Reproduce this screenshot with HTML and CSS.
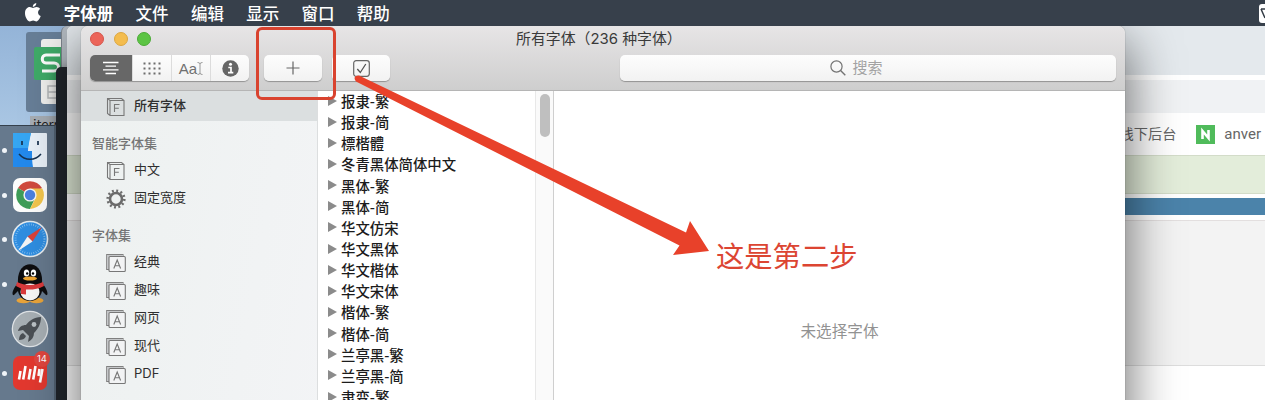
FILE: index.html
```html
<!DOCTYPE html>
<html lang="zh-CN">
<head>
    <meta charset="UTF-8">
    <meta name="viewport" content="width=device-width, initial-scale=1.0">
    <title>字体册</title>
    <link rel="stylesheet" href="styles.css">
</head>
<body>
    <!-- shared icons -->
    <svg class="defs" width="0" height="0">
        <symbol id="book" viewBox="0 0 20 20">
            <path d="M1.5 1.5h14l2.500 2v15H4l-2.500-2zM1.500 1.500L4 3.500h14M4 3.500v15" fill="none" stroke="#777" stroke-width="1.100"/>
            <path d="M8.500 15V7.500h5M8.500 11.200h4.300" fill="none" stroke="#777" stroke-width="1.100"/>
        </symbol>
        <symbol id="stack" viewBox="0 0 20 20">
            <path d="M3 16.500H.7V1.500H17V3.500" fill="none" stroke="#808080" stroke-width="1.100"/>
            <path d="M1 2h16v1.500H3V16H1z" fill="#c5c7c9"/>
            <rect x="3" y="3.500" width="16.300" height="15" rx="1" fill="#f2f3f4" stroke="#777" stroke-width="1.100"/>
            <path d="M7.800 15.500L11.200 7l3.400 8.500M9 12.700h4.400" fill="none" stroke="#777" stroke-width="1.100"/>
        </symbol>
    </svg>

    <div class="menubar">
        <svg class="apple" width="18" height="20" viewBox="0 0 18 20">
            <path d="M12.300 0c.2 2-1.700 4-3.500 3.900C8.600 2.100 10.400.2 12.300 0zM9 5.100c.8 0 1.900-1 3.600-1 1.400 0 2.700.7 3.500 1.900-3 1.900-2.600 5.900.6 7.100-.8 2.300-2.500 5.300-4.300 5.300-1.300 0-1.700-.8-3.300-.8s-2.100.8-3.300.8C3.700 18.400 1 14.200 1 10.200c0-3.800 2.300-6.100 4.700-6.100 1.500 0 2.500 1 3.300 1z" fill="#fff"/>
        </svg>
        <b>字体册</b>
        <span>文件</span>
        <span>编辑</span>
        <span>显示</span>
        <span>窗口</span>
        <span>帮助</span>
        <div class="status">
            <svg width="6" height="19" viewBox="0 0 6 19"><path d="M2 5h6M2 5l4 9" stroke="#333b45" stroke-width="1.500" fill="none"/></svg>
        </div>
    </div>

    <div class="desktop">
        <div class="file">
            <svg width="35" height="80" viewBox="0 0 35 80">
                <rect x="15" y="7" width="30" height="65" rx="3" fill="#f1f1ef"/>
                <rect x="8" y="15" width="40" height="33" rx="2" fill="#3fab68"/>
                <path d="M34 23H20c-5 0-5 8 0 8h8c6 0 6 8 0 8H16" fill="none" stroke="#fff" stroke-width="3"/>
                <path d="M34 54H22v12h12M22 60h12" fill="none" stroke="#b5b8ba" stroke-width="1.500"/>
            </svg>
        </div>
        <div class="file-name">iterm</div>

        <div class="window back"></div>
        <div class="window terminal"></div>

        <div class="window browser">
            <div class="tabs"></div>
            <div class="address"></div>
            <div class="bookmarks">
                <span>线下后台</span>
                <svg width="19" height="19" viewBox="0 0 19 19"><rect width="19" height="19" fill="#50bb5b"/><path d="M6.500 14V6l6 7V5" fill="none" stroke="#fff" stroke-width="2.600"/></svg>
                <span>anver</span>
            </div>
            <div class="notice"></div>
            <div class="bluebar"></div>
            <div class="panel"></div>
        </div>

        <div class="dock">
            <div class="app on">
                <svg width="36" height="36" viewBox="0 0 36 36">
                    <rect x="1" y="1" width="34" height="34" rx="1" fill="#e8f0f8"/>
                    <path d="M1 1h18c-2 6-3 12-3 18h4c0 6 0 11 1 16H1z" fill="#2389ec"/>
                    <path d="M1 1h18l-3 15H1z" fill="#36a6f2"/>
                    <path d="M10 9v4M26 9v4" stroke="#17324f" stroke-width="1.700"/>
                    <path d="M7 22c6 7 16 7 22 0" fill="none" stroke="#17324f" stroke-width="1.500"/>
                </svg>
            </div>
            <div class="app on">
                <svg width="36" height="36" viewBox="0 0 36 36">
                    <rect x="1" y="1" width="34" height="34" rx="7" fill="#fdfdfc"/>
                    <path d="M18 18L6 11.100A13.900 13.900 0 0 1 30 11.100z" fill="#d04a3e"/>
                    <path d="M18 18L6 11.100A13.900 13.900 0 0 0 18 31.900L23.200 21z" fill="#3f9d58"/>
                    <path d="M18 11.500H30.300A13.900 13.900 0 0 1 18 31.900L23.600 21z" fill="#f3c64d"/>
                    <circle cx="18" cy="18" r="6.600" fill="#f5f5f5"/>
                    <circle cx="18" cy="18" r="5.200" fill="#4a80e0"/>
                </svg>
            </div>
            <div class="app on">
                <svg width="38" height="38" viewBox="0 0 38 38">
                    <circle cx="19" cy="19" r="18.300" fill="#e5eaed"/>
                    <circle cx="19" cy="19" r="16.700" fill="#2f8de0"/>
                    <circle cx="19" cy="19" r="14.500" fill="none" stroke="#9cccf2" stroke-width="2" stroke-dasharray=".6 1.700"/>
                    <path d="M31 7L16.500 16.500l5 5z" fill="#d9423a"/>
                    <path d="M7 31l14.500-9.500-5-5z" fill="#f4f4f4"/>
                </svg>
            </div>
            <div class="app on">
                <svg width="36" height="40" viewBox="0 0 36 40">
                    <ellipse cx="11.500" cy="36.500" rx="7" ry="2.800" fill="#e9a43a"/>
                    <ellipse cx="24.500" cy="36.500" rx="7" ry="2.800" fill="#e9a43a"/>
                    <path d="M6 19C-1 27 0 32 2 31l4-4c1 6 6 10 12 10s11-4 12-10l4 4c2 1 3-4-4-12z" fill="#0d0d0f"/>
                    <ellipse cx="18" cy="28" rx="9.500" ry="8.500" fill="#f6f6f6"/>
                    <path d="M6 19C4-6 32-6 30 19z" fill="#0d0d0f"/>
                    <ellipse cx="14.500" cy="9" rx="2.700" ry="3.500" fill="#fff"/>
                    <ellipse cx="21.500" cy="9" rx="2.700" ry="3.500" fill="#fff"/>
                    <circle cx="15.200" cy="9.500" r="1.200"/>
                    <circle cx="21" cy="9.500" r="1.200"/>
                    <ellipse cx="18" cy="14.500" rx="7" ry="2" fill="#eda431"/>
                    <path d="M5 18c8 4 18 4 26 0l1 4c-6 3-12 4-18 3.500v5l-5-.5v-5.500l-5-2.500z" fill="#d93a3c"/>
                </svg>
            </div>
            <div class="app">
                <svg width="38" height="38" viewBox="0 0 38 38">
                    <circle cx="19" cy="19" r="18.300" fill="#dfe3e6"/>
                    <circle cx="19" cy="19" r="17" fill="#a7afb4"/>
                    <path d="M30 7c-7 0-12 4-15 8-4 0-7 2-8 6l5-1 6 6-1 6c4-2 6-5 6-9 4-4 7-9 7-16zM12 23c-3 1-4 4-4 7 3 0 6-1 7-4z" fill="#4a4f54"/>
                    <circle cx="23" cy="14.500" r="2.400" fill="#b9c0c4"/>
                </svg>
            </div>
            <div class="app on">
                <svg width="36" height="36" viewBox="0 0 36 36">
                    <rect x="1" y="1" width="34" height="34" rx="7" fill="#e2382f"/>
                    <path d="M8.500 16L7 24.500M13.500 11l-2.300 13.500M18.500 14l-1.800 10.500M23.500 11l-2.300 13.500M27.500 14l-1 7M30.500 14L28 27.500" fill="none" stroke="#fff" stroke-width="2.600"/>
                </svg>
                <i class="badge">14</i>
            </div>
            <div class="app next">
                <svg width="36" height="36" viewBox="0 0 36 36"><path d="M20 5l2-3M25 5l2-3" stroke="#d8c56a" stroke-width="1.500"/></svg>
            </div>
        </div>

        <div class="window fontbook">
            <div class="head">
                <div class="titlebar">
                    <div class="lights"><i class="red"></i><i class="yellow"></i><i class="green"></i></div>
                    <div class="title">所有字体（236 种字体）</div>
                </div>
                <div class="toolbar">
                    <div class="segments">
                        <div class="seg active">
                            <svg width="18" height="14" viewBox="0 0 18 14"><path d="M1 1.500h15.500M3.500 5.200h10.500M1 8.800h15.500M3.500 12.500h10.500" stroke="#fff" stroke-width="1.300"/></svg>
                        </div>
                        <div class="seg">
                            <svg width="18" height="13" viewBox="0 0 18 13"><path d="M.5 1.500h17M.5 6.500h17M.5 11.500h17" stroke="#6d6d6d" stroke-width="2" stroke-dasharray="2 3"/></svg>
                        </div>
                        <div class="seg sample">Aa<svg width="6" height="13" viewBox="0 0 6 13"><path d="M.5.500Q3 .5 3 2V11Q3 12.500.5 12.500M5.500.500Q3 .5 3 2M5.500 12.500Q3 12.500 3 11" fill="none" stroke="#999"/></svg></div>
                        <div class="seg">
                            <svg width="17" height="17" viewBox="0 0 17 17"><circle cx="8.500" cy="8.500" r="8.200" fill="#666"/><circle cx="8.500" cy="4.300" r="1.500" fill="#fff"/><path d="M6.300 7.500h2.700v5M6 12.600h5.300" stroke="#fff" stroke-width="1.700" fill="none"/></svg>
                        </div>
                    </div>
                    <div class="button add">
                        <svg width="14" height="14" viewBox="0 0 14 14"><path d="M7 .5v13M.5 7h13" stroke="#666" stroke-width="1.200"/></svg>
                    </div>
                    <div class="button check">
                        <svg width="17" height="17" viewBox="0 0 17 17"><rect x=".7" y=".7" width="15.600" height="15.600" rx="2.500" fill="none" stroke="#666" stroke-width="1.200"/><path d="M4.300 9l3 3.500 5.500-8.500" fill="none" stroke="#555" stroke-width="1.300"/></svg>
                    </div>
                    <div class="search">
                        <svg width="16" height="16" viewBox="0 0 16 16"><circle cx="6.500" cy="6.500" r="5.600" fill="none" stroke="#737373" stroke-width="1.200"/><path d="M10.600 10.600l4.700 4.700" stroke="#737373" stroke-width="1.400"/></svg>
                        <span>搜索</span>
                    </div>
                </div>
            </div>

            <div class="content">
                <div class="sidebar">
                    <div class="item selected"><svg><use href="#book"/></svg>所有字体</div>
                    <h4>智能字体集</h4>
                    <div class="item"><svg><use href="#book"/></svg>中文</div>
                    <div class="item">
                        <svg viewBox="0 0 20 20"><circle cx="10" cy="10" r="6" fill="none" stroke="#6b6b6b" stroke-width="2.600"/><circle cx="10" cy="10" r="8.300" fill="none" stroke="#6b6b6b" stroke-width="2.600" stroke-dasharray="1.900 2.445"/></svg>固定宽度
                    </div>
                    <h4 class="sets">字体集</h4>
                    <div class="item"><svg><use href="#stack"/></svg>经典</div>
                    <div class="item"><svg><use href="#stack"/></svg>趣味</div>
                    <div class="item"><svg><use href="#stack"/></svg>网页</div>
                    <div class="item"><svg><use href="#stack"/></svg>现代</div>
                    <div class="item"><svg><use href="#stack"/></svg>PDF</div>
                </div>
                <ul class="fonts">
                    <li>报隶-繁</li>
                    <li>报隶-简</li>
                    <li>標楷體</li>
                    <li>冬青黑体简体中文</li>
                    <li>黑体-繁</li>
                    <li>黑体-简</li>
                    <li>华文仿宋</li>
                    <li>华文黑体</li>
                    <li>华文楷体</li>
                    <li>华文宋体</li>
                    <li>楷体-繁</li>
                    <li>楷体-简</li>
                    <li>兰亭黑-繁</li>
                    <li>兰亭黑-简</li>
                    <li>隶变-繁</li>
                </ul>
                <div class="scroll"><div class="thumb"></div></div>
                <div class="preview">未选择字体</div>
            </div>
        </div>
    </div>

    <!-- step marks drawn over the window -->
    <div class="mark-box"></div>
    <svg class="mark-arrow" width="1265" height="400" viewBox="0 0 1265 400">
        <path d="M359 75.500L686 232.500L690 221L709 251L673 255L679.500 245.500L356 81.500Q352 76 359 75.500z" fill="#e8412a"/>
    </svg>
    <div class="mark-text">这是第二步</div>
</body>
</html>
```
FILE: styles.css
```css
*{
    margin: 0;
    padding: 0;
    box-sizing: border-box;
}

body{
    width: 1265px;
    height: 400px;
    overflow: hidden;
    position: relative;
    font-family: "Noto Sans CJK SC", sans-serif;
    background-color: #9dbbdc;
}

svg{
    display: block;
    flex-shrink: 0;
}

.defs{
    position: absolute;
}

/* menu bar */
.menubar{
    height: 26px;
    display: flex;
    align-items: center;
    gap: 22.3px;
    padding-left: 24px;
    background-color: #37404b;
    color: #fff;
    font-size: 16.5px;
    line-height: 24px;
    font-weight: 500;
}

.menubar b{
    font-weight: 700;
}

.menubar b,
.menubar span{
    margin-top: -1px;
}

.apple{
    margin-right: -0.5px;
}

.status{
    margin-left: auto;
    width: 6px;
    height: 19px;
    background-color: #fff;
    border-radius: 3px 0 0 3px;
}

/* desktop */
.desktop{
    position: relative;
    height: 374px;
    overflow: hidden;
    background: linear-gradient(#94b4d8, #a9c6e3 100px);
}

.file{
    position: absolute;
    left: 26px;
    top: 6px;
    width: 35px;
    height: 80px;
    background-color: #677e97;
    border-radius: 3px 0 0 3px;
    overflow: hidden;
}

.file-name{
    position: absolute;
    left: 30px;
    top: 90px;
    width: 40px;
    padding-left: 3px;
    background-color: #a6adb4;
    font-size: 13px;
    line-height: 16px;
    color: #222;
}

.window{
    position: absolute;
}

.back{
    left: 61px;
    top: 0;
    width: 400px;
    height: 374px;
    background-color: #b3bac1;
    border-left: 1px solid #7d858d;
    border-radius: 6px 0 0 0;
}

.terminal{
    left: 56px;
    top: 41px;
    width: 400px;
    height: 333px;
    background-color: #20252b;
    border-radius: 5px 0 0 0;
    box-shadow: 0 0 10px rgba(0, 0, 0, 0.3);
}

.browser{
    left: 67px;
    top: 0;
    width: 1198px;
    height: 374px;
    background-color: #fff;
    border-radius: 6px 0 0 0;
    overflow: hidden;
}

.tabs{
    height: 49px;
    background-color: #e4e9ed;
}

.address{
    height: 38px;
    background-color: #f0f2f4;
    border-top: 5px solid #fff;
}

.bookmarks{
    height: 42px;
    display: flex;
    align-items: center;
    justify-content: flex-end;
    gap: 9px;
    padding-right: 4px;
    font-size: 14.2px;
    line-height: 20px;
    color: #666;
}

.bookmarks svg{
    margin-left: 11px;
}

.bookmarks span:first-child{
    margin-top: -2px;
}

.bookmarks span:last-child{
    font-family: Roboto, sans-serif;
    font-size: 15px;
}

.notice{
    height: 39px;
    background-color: #e3edda;
    border-top: 1px solid #d3dcc9;
    border-bottom: 1px solid #d3dcc9;
}

.bluebar{
    height: 17px;
    margin: 4px 0 5px 100px;
    background-color: #4b83aa;
}

.panel{
    height: 146px;
    background-color: #f3f3f3;
    border-top: 1px solid #e3dfdf;
    border-bottom: 1px solid #ddd;
}

/* dock */
.dock{
    position: absolute;
    left: 0;
    top: 99px;
    width: 56px;
    height: 275px;
    padding-top: 2px;
    background-color: #66798d;
    border-top: 1px solid #35414d;
    border-right: 2px solid #526171;
    overflow: hidden;
}

.app{
    position: relative;
    height: 44.6px;
    padding-left: 5px;
    display: flex;
    align-items: center;
    justify-content: center;
}

.app.on::before{
    content: "";
    position: absolute;
    left: 2px;
    top: 20px;
    width: 5px;
    height: 5px;
    border-radius: 50%;
    background-color: #f0f4f8;
}

.badge{
    position: absolute;
    right: 4px;
    top: 0;
    width: 16px;
    height: 16px;
    border-radius: 50%;
    background-color: #e0463f;
    color: #fff;
    font: 9.5px/16px Inter, sans-serif;
    text-align: center;
}

/* font book window */
.fontbook{
    left: 81px;
    top: 0;
    width: 1044px;
    height: 500px;
    display: flex;
    flex-direction: column;
    background-color: #fff;
    border-radius: 7px 7px 0 0;
    box-shadow: 0 0 1px rgba(0, 0, 0, 0.6), 0 20px 50px 4px rgba(0, 0, 0, 0.55);
}

.head{
    height: 65px;
    background: linear-gradient(#e7e5e6, #cecece);
    border-bottom: 1px solid #b5b5b5;
    border-radius: 7px 7px 0 0;
}

.titlebar{
    height: 29px;
    display: flex;
    align-items: center;
    padding-left: 9px;
}

.lights{
    display: flex;
    gap: 9.5px;
    margin-top: -3px;
}

.lights i{
    width: 14px;
    height: 14px;
    border-radius: 50%;
}

.red{
    background-color: #ec6459;
    border: 1px solid #d5554b;
}

.yellow{
    background-color: #f4bc4e;
    border: 1px solid #dca63f;
}

.green{
    background-color: #5cc444;
    border: 1px solid #4bab36;
}

.title{
    margin-left: 365px;
    margin-top: -4px;
    font-family: Inter, "Noto Sans CJK SC", sans-serif;
    font-size: 14.9px;
    line-height: 22px;
    color: #3a3a3a;
    white-space: nowrap;
}

.toolbar{
    display: flex;
    padding: 0 9px;
}

.segments,
.button,
.search{
    height: 26px;
    display: flex;
    align-items: center;
    justify-content: center;
    background: linear-gradient(#fdfdfd, #f2f2f2);
    border-radius: 5px;
    box-shadow: 0 1px 1px rgba(0, 0, 0, 0.3);
}

.segments{
    width: 159px;
    overflow: hidden;
}

.seg{
    flex: 1;
    height: 26px;
    display: flex;
    align-items: center;
    justify-content: center;
    border-left: 1px solid #dcdcdc;
}

.seg.active{
    flex: 0 0 42px;
    background-color: #676767;
    border-left: none;
}

.sample{
    font-family: "Liberation Sans", sans-serif;
    font-size: 15px;
    color: #707070;
}

.add{
    width: 58px;
    margin-left: 15px;
}

.check{
    width: 58px;
    margin-left: 10px;
}

.search{
    flex: 1;
    margin-left: 230px;
    padding-right: 23px;
    gap: 6px;
    font-size: 15px;
    line-height: 24px;
    color: #a3a3a3;
}

.search span{
    margin-top: -2px;
}

.content{
    flex: 1;
    display: flex;
}

.sidebar{
    width: 237px;
    background: linear-gradient(100deg, #edf1f0, #f3f4f6);
    border-right: 1px solid #dcdedf;
}

.item{
    height: 28px;
    display: flex;
    align-items: center;
    gap: 8px;
    padding: 0 0 3px 25px;
    font-family: Inter, "Noto Sans CJK SC", sans-serif;
    font-size: 13px;
    line-height: 20px;
    color: #2f2f2f;
}

.item svg{
    width: 20px;
    height: 20px;
    position: relative;
    top: 2px;
}

.selected{
    height: 30px;
    background-color: #dbdfe0;
    font-weight: 500;
}

.sidebar h4{
    height: 35px;
    padding: 12px 0 0 11px;
    font-size: 13px;
    line-height: 20px;
    font-weight: 500;
    color: #757575;
}

.sidebar .sets{
    height: 36px;
    padding-top: 13px;
}

.fonts{
    width: 218px;
    list-style: none;
    border-right: 1px solid #e8e8e8;
}

.fonts li{
    height: 21.15px;
    display: flex;
    align-items: center;
    gap: 4px;
    padding: 0 0 1px 10px;
    font-size: 14.4px;
    line-height: 20px;
    font-weight: 500;
    color: #1c1c1c;
}

.fonts li::before{
    content: "";
    border-left: 9px solid #8b8b8b;
    border-top: 5px solid transparent;
    border-bottom: 5px solid transparent;
    margin-top: -1px;
}

.scroll{
    width: 18px;
    padding: 3px 0 0 4px;
    background-color: #fafafa;
    border-right: 1px solid #cfcfcf;
}

.thumb{
    width: 10px;
    height: 43px;
    border-radius: 5px;
    background-color: #bfbfbf;
}

.preview{
    flex: 1;
    padding-top: 228px;
    text-align: center;
    font-size: 15.6px;
    line-height: 23px;
    color: #929292;
}

/* marks */
.mark-box{
    position: absolute;
    left: 256px;
    top: 27px;
    width: 80px;
    height: 73px;
    border: 3px solid #d9432f;
    border-radius: 6px;
}

.mark-arrow{
    position: absolute;
    left: 0;
    top: 0;
}

.mark-text{
    position: absolute;
    left: 716px;
    top: 234px;
    font-size: 28.3px;
    line-height: 42px;
    color: #dc4532;
}
```
